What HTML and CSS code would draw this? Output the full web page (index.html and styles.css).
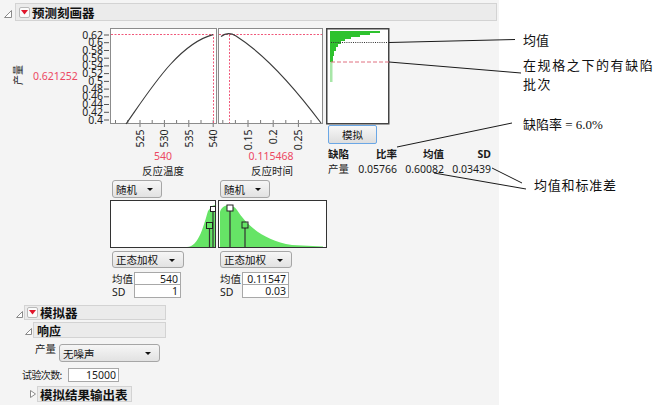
FILE: index.html
```html
<!DOCTYPE html>
<html lang="zh">
<head>
<meta charset="utf-8">
<title>预测刻画器</title>
<link rel="stylesheet" href="styles.css">
</head>
<body>
<div class="panel">
  <div class="ohead">
    <span class="disc"><svg width="8" height="8" viewBox="0 0 8 8"><polygon points="7.5,0.5 7.5,7.5 0.5,7.5" fill="#fff" stroke="#8a8a8a"/></svg></span>
    <div class="bar bar-main"><span class="redbtn"><svg width="7" height="5" viewBox="0 0 7 5"><polygon points="0,0 7,0 3.5,4.5" fill="#e0162b"/></svg></span>预测刻画器</div>
  </div>

  <div class="profiler">
    <div class="prof-main">
      <svg class="chart" width="326" height="153" viewBox="0 25 326 153">
        <text class="ylab" transform="translate(22,75) rotate(-90)" text-anchor="middle">产量</text>
        <text class="red" x="33" y="80">0.621252</text>
        <g class="axis" text-anchor="end">
          <text x="103" y="38.5">0.62</text>
          <text x="103" y="46.2">0.6</text>
          <text x="103" y="54">0.58</text>
          <text x="103" y="61.7">0.56</text>
          <text x="103" y="69.4">0.54</text>
          <text x="103" y="77.1">0.52</text>
          <text x="103" y="84.9">0.5</text>
          <text x="103" y="92.6">0.48</text>
          <text x="103" y="100.3">0.46</text>
          <text x="103" y="108">0.44</text>
          <text x="103" y="115.8">0.42</text>
          <text x="103" y="123.5">0.4</text>
        </g>
        <g stroke="#555" stroke-width="1">
          <path d="M104,35H109M104,42.7H109M104,50.5H109M104,58.2H109M104,65.9H109M104,73.6H109M104,81.4H109M104,89.1H109M104,96.8H109M104,104.5H109M104,112.3H109M104,120H109"/>
        </g>
        <rect x="110.5" y="28.5" width="106" height="95" fill="#fff" stroke="#8c8c8c"/>
        <rect x="218.5" y="28.5" width="104" height="95" fill="#fff" stroke="#8c8c8c"/>
        <g stroke="#777" stroke-width="1">
          <path d="M115.5,123V120M127.8,123V120M140,123V120M152.2,123V120M164.4,123V120M176.6,123V120M188.8,123V120M201,123V120M213.2,123V120"/>
          <path d="M140,124V127M164.4,124V127M188.8,124V127M213.2,124V127"/>
          <path d="M222.8,123V120M235.4,123V120M248,123V120M260.6,123V120M273.2,123V120M285.8,123V120M298.4,123V120M311,123V120"/>
          <path d="M248,124V127M273.2,124V127M298.4,124V127"/>
        </g>
        <g stroke="#f0587a" stroke-width="1" stroke-dasharray="2 1.5" fill="none">
          <path d="M111,34.5H213.5V123"/>
          <path d="M219,34.5H322M229.5,34.5V123"/>
        </g>
        <path d="M126,124 C150,90 178,44 213,34.6" fill="none" stroke="#3a3a3a" stroke-width="1.1"/>
        <path d="M221,36.5 Q228,31 236,36 C255,48 285,75 321,123" fill="none" stroke="#3a3a3a" stroke-width="1.1"/>
        <g class="axis" text-anchor="end">
          <text transform="translate(143.5,129.5) rotate(-90)">525</text>
          <text transform="translate(168,129.5) rotate(-90)">530</text>
          <text transform="translate(192.5,129.5) rotate(-90)">535</text>
          <text transform="translate(217,129.5) rotate(-90)">540</text>
          <text transform="translate(251.5,129.5) rotate(-90)">0.15</text>
          <text transform="translate(276.7,129.5) rotate(-90)">0.2</text>
          <text transform="translate(301.9,129.5) rotate(-90)">0.25</text>
        </g>
        <text class="red" x="163" y="160" text-anchor="middle">540</text>
        <text class="red" x="271" y="160" text-anchor="middle">0.115468</text>
        <text class="fname" x="163" y="175" text-anchor="middle">反应温度</text>
        <text class="fname" x="272" y="175" text-anchor="middle">反应时间</text>
      </svg>

      <div class="factors">
        <div class="factor f1">
          <div class="dd dd-rand">随机</div>
          <svg class="dist" width="108" height="48" viewBox="110 200 108 48">
            <rect x="110.5" y="200.5" width="105" height="47" fill="#fff" stroke="#333"/>
            <path d="M187,247 C199,247 204,224 208,211 L212,206 L215,205 L215,247 Z" fill="#66e466"/>
            <path d="M209.5,228V247M213,212V247" stroke="#333" stroke-width="1.2"/>
            <rect x="206.5" y="222.5" width="6" height="6" fill="none" stroke="#222"/>
            <rect x="210.5" y="206.5" width="5" height="5" fill="#fff" stroke="#222"/>
          </svg>
          <div class="dd dd-wt">正态加权</div>
          <div class="param"><span class="plabel">均值</span><span class="pval">540</span></div>
          <div class="param"><span class="plabel">SD</span><span class="pval">1</span></div>
        </div>
        <div class="factor f2">
          <div class="dd dd-rand">随机</div>
          <svg class="dist" width="109" height="48" viewBox="218 200 109 48">
            <rect x="218.5" y="200.5" width="108" height="47" fill="#fff" stroke="#333"/>
            <path d="M220,247 L220,212 C222,204 232,203 237,210 C246,224 262,240 292,245 L323,246.5 L323,247 Z" fill="#66e466"/>
            <path d="M230,211V247M245,228V247" stroke="#333" stroke-width="1.2"/>
            <rect x="227" y="205" width="6" height="6" fill="#fff" stroke="#222"/>
            <rect x="242" y="222" width="6" height="6" fill="none" stroke="#222"/>
          </svg>
          <div class="dd dd-wt">正态加权</div>
          <div class="param"><span class="plabel">均值</span><span class="pval">0.11547</span></div>
          <div class="param"><span class="plabel">SD</span><span class="pval">0.03</span></div>
        </div>
      </div>
    </div>

    <div class="prof-side">
      <svg class="hist" width="66" height="97" viewBox="326 28 66 97">
        <rect x="326.75" y="28.75" width="62" height="95" fill="#fff" stroke="#444" stroke-width="1.5"/>
        <path d="M330,31 H380 V33 H370 V35 H360 V37 H351 V39 H345 V41 H341 V44 H338 V47 H336 V51 H334 V56 H333 V62 H330 Z" fill="#2ec22e"/>
        <rect x="330" y="62" width="2.5" height="20" fill="#a8e6a8"/>
        <path d="M331,42.5H389" stroke="#333" stroke-dasharray="1 1.2"/>
        <path d="M331,62H389" stroke="#e07080" stroke-dasharray="4 2"/>
      </svg>
      <button class="simbtn">模拟</button>
      <div class="stats">
        <span class="b">缺陷</span><span class="b r">比率</span><span class="b r">均值</span><span class="b r sd">SD</span>
        <span>产量</span><span class="r">0.05766</span><span class="r">0.60082</span><span class="r">0.03439</span>
      </div>
    </div>
  </div>

  <div class="sim">
    <div class="ohead sub1">
      <span class="disc"><svg width="7" height="7" viewBox="0 0 7 7"><polygon points="6.5,0.5 6.5,6.5 0.5,6.5" fill="#fff" stroke="#8a8a8a"/></svg></span>
      <div class="bar bar-sim"><span class="redbtn"><svg width="7" height="5" viewBox="0 0 7 5"><polygon points="0,0 7,0 3.5,4.5" fill="#e0162b"/></svg></span>模拟器</div>
    </div>
    <div class="ohead sub2">
      <span class="disc"><svg width="7" height="7" viewBox="0 0 7 7"><polygon points="6.5,0.5 6.5,6.5 0.5,6.5" fill="#fff" stroke="#8a8a8a"/></svg></span>
      <div class="bar bar-resp">响应</div>
    </div>
    <div class="prodrow">
      <span class="prodlab">产量</span>
      <div class="dd dd-noise">无噪声</div>
    </div>
    <div class="trialrow">
      <span class="triallab">试验次数:</span>
      <span class="pval trialval">15000</span>
    </div>
    <div class="ohead sub3">
      <span class="disc"><svg width="6" height="8" viewBox="0 0 6 8"><polygon points="0.5,0.5 5.5,4 0.5,7.5" fill="#fff" stroke="#8a8a8a"/></svg></span>
      <div class="bar bar-out">模拟结果输出表</div>
    </div>
  </div>
</div>

<div class="notes">
  <p class="n1">均值</p>
  <p class="n2">在规格之下的有缺陷<br>批次</p>
  <p class="n3">缺陷率 = 6.0%</p>
  <p class="n4">均值和标准差</p>
</div>

<svg class="callouts" width="666" height="413" viewBox="0 0 666 413">
  <g stroke="#1a1a1a" stroke-width="1" fill="none">
    <path d="M389,42.5 L515,39.5"/>
    <path d="M389,62 L521,73"/>
    <path d="M397,147 L512,123"/>
    <path d="M434,173 L526,189"/>
    <path d="M492,168 L522,183"/>
  </g>
</svg>
</body>
</html>
```
FILE: styles.css
```css
* { box-sizing: border-box; }
html, body { margin: 0; padding: 0; }
body {
  width: 666px;
  height: 413px;
  overflow: hidden;
  position: relative;
  display: flex;
  align-items: flex-start;
  background: #fff;
  font-family: "Noto Sans", "Noto Sans CJK SC", sans-serif;
  font-size: 10px;
  color: #1a1a1a;
}
.panel {
  flex: none;
  width: 499px;
  height: 405px;
  background: #f4f4f4;
  padding-top: 3px;
}
.ohead {
  display: flex;
  align-items: center;
}
.ohead > .disc {
  flex: none;
  width: 15px;
  display: flex;
  justify-content: center;
  padding-top: 4px;
}
.bar {
  display: flex;
  align-items: center;
  background: #ebebeb;
  border: 1px solid #d3d3d3;
  font-family: "Noto Sans CJK SC", sans-serif;
  font-weight: 700;
  color: #111;
}
.bar-main {
  width: 482px;
  height: 18px;
  padding-left: 3px;
  font-size: 12.5px;
}
.redbtn {
  flex: none;
  width: 11px;
  height: 11px;
  margin-right: 2px;
  border: 1px solid #b9b9b9;
  border-radius: 2px;
  background: #fbfbfb;
  display: flex;
  align-items: center;
  justify-content: center;
}
.profiler {
  display: flex;
  margin-top: 4px;
}
.prof-main {
  flex: none;
  width: 326px;
}
.chart { display: block; }
.chart text {
  font-family: "Noto Sans", "Noto Sans CJK SC", sans-serif;
  font-size: 10.5px;
  fill: #222;
}
.chart .red { fill: #ec4863; }
.chart .fname { font-size: 10.5px; fill: #222; }
.chart .ylab { font-size: 10px; }
.factors {
  display: flex;
  padding-left: 110px;
  margin-top: 2px;
}
.factor { flex: none; display: flex; flex-direction: column; }
.f1 { width: 108px; }
.f2 { width: 109px; }
.dist { display: block; margin-top: 2px; }
.dd {
  position: relative;
  display: flex;
  align-items: center;
  padding-left: 3px;
  margin-left: 2px;
  border: 1px solid #a6a6a6;
  border-radius: 3px;
  background: linear-gradient(#f6f6f6, #e2e2e2);
  font-family: "Noto Sans CJK SC", sans-serif;
  font-size: 10.5px;
  color: #111;
}
.dd::after {
  content: "";
  position: absolute;
  right: 8px;
  top: 50%;
  margin-top: -1px;
  border-left: 3px solid transparent;
  border-right: 3px solid transparent;
  border-top: 3px solid #111;
}
.dd-rand { width: 50px; height: 18px; }
.dd-wt { width: 72px; height: 17px; margin-top: 3px; }
.param {
  display: flex;
  align-items: center;
  height: 13px;
  margin-left: 2px;
}
.dd-wt + .param { margin-top: 4px; }
.plabel {
  width: 22px;
  font-family: "Noto Sans", "Noto Sans CJK SC", sans-serif;
  font-size: 10.5px;
}
.pval {
  display: block;
  width: 47px;
  height: 13px;
  line-height: 12px;
  padding-right: 2px;
  text-align: right;
  background: #fff;
  border: 1px solid #a8a8a8;
  font-size: 10.5px;
}
.param + .param .pval { border-top: none; }
.prof-side {
  flex: none;
  width: 173px;
  margin-top: 3px;
}
.hist { display: block; }
.simbtn {
  display: block;
  width: 49px;
  height: 19px;
  margin: 0 0 0 2px;
  padding: 0;
  border: 1px solid #6aa7e6;
  border-radius: 2px;
  background: linear-gradient(#f7f7f7, #dedede);
  font-family: "Noto Sans CJK SC", sans-serif;
  font-size: 10.5px;
  color: #111;
}
.stats {
  display: grid;
  grid-template-columns: 22px 47px 47px 47px;
  grid-auto-rows: 15px;
  align-items: center;
  margin: 2px 0 0 2px;
  font-size: 10.5px;
}
.stats .b { font-weight: 700; font-family: "Noto Sans CJK SC", sans-serif; }
.stats .sd { font-family: "Noto Sans", sans-serif; }
.stats .r { text-align: right; }
.stats span { white-space: nowrap; }
.sim { margin-top: 7px; }
.sub1 { padding-left: 15px; }
.sub1 > .disc, .sub2 > .disc, .sub3 > .disc { width: 9px; padding-top: 3px; }
.bar-sim {
  width: 142px;
  height: 15px;
  padding-left: 2px;
  font-size: 12.5px;
}
.sub2 { padding-left: 24px; margin-top: 2px; }
.bar-resp {
  width: 133px;
  height: 16px;
  padding-left: 3px;
  font-size: 12px;
}
.prodrow {
  display: flex;
  align-items: flex-start;
  margin-top: 6px;
  padding-left: 35px;
}
.prodlab { font-family: "Noto Sans CJK SC", sans-serif; font-size: 10.5px; line-height: 10px; width: 24px; }
.dd-noise { width: 101px; height: 18px; margin-left: 0; }
.trialrow {
  display: flex;
  align-items: center;
  margin-top: 5px;
  padding-left: 22px;
}
.triallab {
  width: 46px;
  font-family: "Noto Sans CJK SC", sans-serif;
  font-size: 10px;
  letter-spacing: -0.6px;
}
.trialval { width: 51px; height: 14px; }
.sub3 { padding-left: 28px; margin-top: 4px; }
.sub3 > .disc { width: 9px; padding-top: 0; }
.bar-out {
  width: 95px;
  height: 16px;
  padding-left: 2px;
  font-size: 12.5px;
}
.notes {
  flex: none;
  padding-top: 31px;
  padding-left: 24px;
  font-family: "Liberation Serif", "Noto Sans CJK SC", serif;
  font-size: 13px;
  line-height: 19px;
  color: #111;
}
.notes p { margin: 0; }
.n2 { margin-top: 6px !important; letter-spacing: 1.6px; }
.n3 { margin-top: 21px !important; }
.n4 { margin-top: 42px !important; padding-left: 11px; letter-spacing: 0.8px; }
.callouts {
  position: absolute;
  left: 0;
  top: 0;
  pointer-events: none;
}
```
